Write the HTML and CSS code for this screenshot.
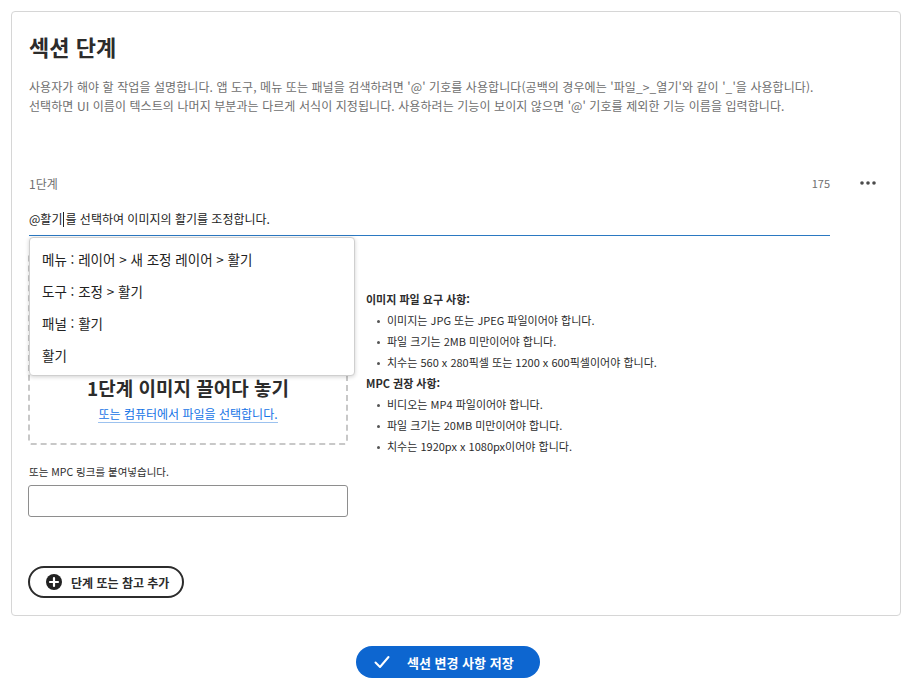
FILE: index.html
```html
<!DOCTYPE html>
<html lang="ko">
<head>
<meta charset="utf-8">
<link rel="stylesheet" href="styles.css">
</head>
<body>
<div class="page">
  <section class="card">
    <h1 class="title">섹션 단계</h1>
    <p class="desc">사용자가 해야 할 작업을 설명합니다. 앱 도구, 메뉴 또는 패널을 검색하려면 '@' 기호를 사용합니다(공백의 경우에는 '파일_&gt;_열기'와 같이 '_'을 사용합니다).<br>선택하면 UI 이름이 텍스트의 나머지 부분과는 다르게 서식이 지정됩니다. 사용하려는 기능이 보이지 않으면 '@' 기호를 제외한 기능 이름을 입력합니다.</p>

    <div class="step-head">
      <span class="step-label">1단계</span>
      <span class="step-count">175</span>
      <span class="more">
        <svg width="16" height="4" viewBox="0 0 16 4"><circle cx="2" cy="2" r="1.8" fill="#4b4b4b"/><circle cx="8" cy="2" r="1.8" fill="#4b4b4b"/><circle cx="14" cy="2" r="1.8" fill="#4b4b4b"/></svg>
      </span>
    </div>

    <div class="step-input-wrap">
      <div class="step-input">@활기<span class="caret"></span>를 선택하여 이미지의 활기를 조정합니다.</div>
      <ul class="menu">
        <li>메뉴 : 레이어 &gt; 새 조정 레이어 &gt; 활기</li>
        <li>도구 : 조정 &gt; 활기</li>
        <li>패널 : 활기</li>
        <li>활기</li>
      </ul>
    </div>

    <div class="media-row">
      <div class="drop">
        <div class="drop-title">1단계 이미지 끌어다 놓기</div>
        <a class="drop-link">또는 컴퓨터에서 파일을 선택합니다.</a>
      </div>
      <div class="reqs">
        <div class="req-head">이미지 파일 요구 사항:</div>
        <ul>
          <li>이미지는 JPG 또는 JPEG 파일이어야 합니다.</li>
          <li>파일 크기는 2MB 미만이어야 합니다.</li>
          <li>치수는 560 x 280픽셀 또는 1200 x 600픽셀이어야 합니다.</li>
        </ul>
        <div class="req-head">MPC 권장 사항:</div>
        <ul>
          <li>비디오는 MP4 파일이어야 합니다.</li>
          <li>파일 크기는 20MB 미만이어야 합니다.</li>
          <li>치수는 1920px x 1080px이어야 합니다.</li>
        </ul>
      </div>
    </div>

    <div class="link-label">또는 MPC 링크를 붙여넣습니다.</div>
    <div class="link-input"></div>

    <button class="add-btn">
      <svg width="16" height="16" viewBox="0 0 16 16"><circle cx="8" cy="8" r="8" fill="#222"/><path d="M8 4v8M4 8h8" stroke="#fff" stroke-width="2.2" stroke-linecap="round"/></svg>
      <span>단계 또는 참고 추가</span>
    </button>
  </section>

  <div class="save-row">
    <button class="save-btn">
      <svg width="16" height="14" viewBox="0 0 16 14"><path d="M1.5 7.5l4.5 4.5L14.5 2" fill="none" stroke="#fff" stroke-width="2" stroke-linecap="round" stroke-linejoin="round"/></svg>
      <span>섹션 변경 사항 저장</span>
    </button>
  </div>
</div>
</body>
</html>
```

FILE: styles.css
```css
* { box-sizing: border-box; }
html, body { margin: 0; padding: 0; background: #fff; }
body {
  font-family: "Noto Sans CJK KR", "Noto Sans", sans-serif;
  color: #2c2c2c;
}
.page { padding: 11px 17px 0 11px; }

.card {
  position: relative;
  border: 1px solid #d6d6d6;
  border-radius: 4px;
  height: 605px;
  padding: 19px 24px 0 17px;
}

.title {
  margin: 0;
  font-size: 22px;
  line-height: 30px;
  font-weight: 700;
  color: #2c2c2c;
}

.desc {
  margin: 16px 0 0;
  font-size: 12px;
  line-height: 19px;
  color: #6e6e6e;
  letter-spacing: 0.08px;
}

.step-head {
  margin-top: 58px;
  display: flex;
  align-items: center;
  height: 20px;
  font-size: 12px;
  color: #707070;
}
.step-label { flex: 1; }
.step-count { font-size: 11px; margin-right: 30px; }
.more { display: flex; align-items: center; width: 16px; }

.step-input-wrap { position: relative; width: 801px; margin-top: 11px; }
.step-input {
  height: 32px;
  border-bottom: 1px solid #2b79c2;
  font-size: 12px;
  line-height: 18px;
  color: #222;
  padding-top: 6px;
}
.caret {
  display: inline-block;
  width: 1px;
  height: 15px;
  background: #222;
  vertical-align: -3px;
  margin: 0 1px;
}

.menu {
  position: absolute;
  left: 0;
  top: 33px;
  width: 326px;
  margin: 0;
  padding: 5px 0 4px;
  list-style: none;
  background: #fff;
  border: 1px solid #cfcfcf;
  border-radius: 4px;
  box-shadow: 0 1px 4px rgba(0,0,0,0.18);
  z-index: 2;
}
.menu li {
  height: 32px;
  line-height: 32px;
  padding-left: 12px;
  font-size: 13.5px;
  color: #222;
}

.media-row {
  display: flex;
  align-items: flex-start;
  gap: 18px;
  margin-top: 15px;
}
.drop {
  width: 320px;
  height: 194px;
  margin-left: -1px;
  border: 2px dashed #c8c8c8;
  border-radius: 3px;
  display: flex;
  flex-direction: column;
  align-items: center;
  justify-content: flex-end;
  padding-bottom: 20px;
}
.drop-title {
  font-size: 19px;
  line-height: 26px;
  font-weight: 700;
  color: #2c2c2c;
}
.drop-link {
  margin-top: 5px;
  font-size: 12px;
  line-height: 16px;
  color: #1473e6;
  border-bottom: 1px solid #9cc2ef;
}

.reqs {
  padding-top: 38px;
  font-size: 11px;
  line-height: 21px;
  color: #2c2c2c;
}
.req-head { font-weight: 700; }
.reqs ul { margin: 0; padding: 0; list-style: none; }
.reqs li { padding-left: 21px; position: relative; }
.reqs li::before {
  content: "";
  position: absolute;
  left: 11px;
  top: 10px;
  width: 3px;
  height: 3px;
  border-radius: 50%;
  background: #555;
}

.link-label {
  margin-top: 7px;
  font-size: 10.5px;
  line-height: 16px;
  color: #2c2c2c;
}
.link-input {
  margin-top: 5px;
  margin-left: -1px;
  width: 320px;
  height: 32px;
  border: 1px solid #8e8e8e;
  border-radius: 3px;
}

.add-btn {
  margin-top: 49px;
  margin-left: -1px;
  display: flex;
  align-items: center;
  gap: 9px;
  height: 32px;
  padding: 0 13px 0 16px;
  border: 2px solid #2c2c2c;
  border-radius: 16px;
  background: #fff;
  font-family: inherit;
  font-size: 12px;
  font-weight: 700;
  color: #2c2c2c;
  cursor: pointer;
}

.save-row {
  display: flex;
  justify-content: center;
  padding: 30px 16px 0 0;
}
.save-btn {
  display: flex;
  align-items: center;
  width: 184px;
  height: 32px;
  padding: 0 0 0 18px;
  gap: 17px;
  border: none;
  border-radius: 16px;
  background: #0d66d0;
  color: #fff;
  font-family: inherit;
  font-size: 13px;
  font-weight: 700;
  cursor: pointer;
}
```
